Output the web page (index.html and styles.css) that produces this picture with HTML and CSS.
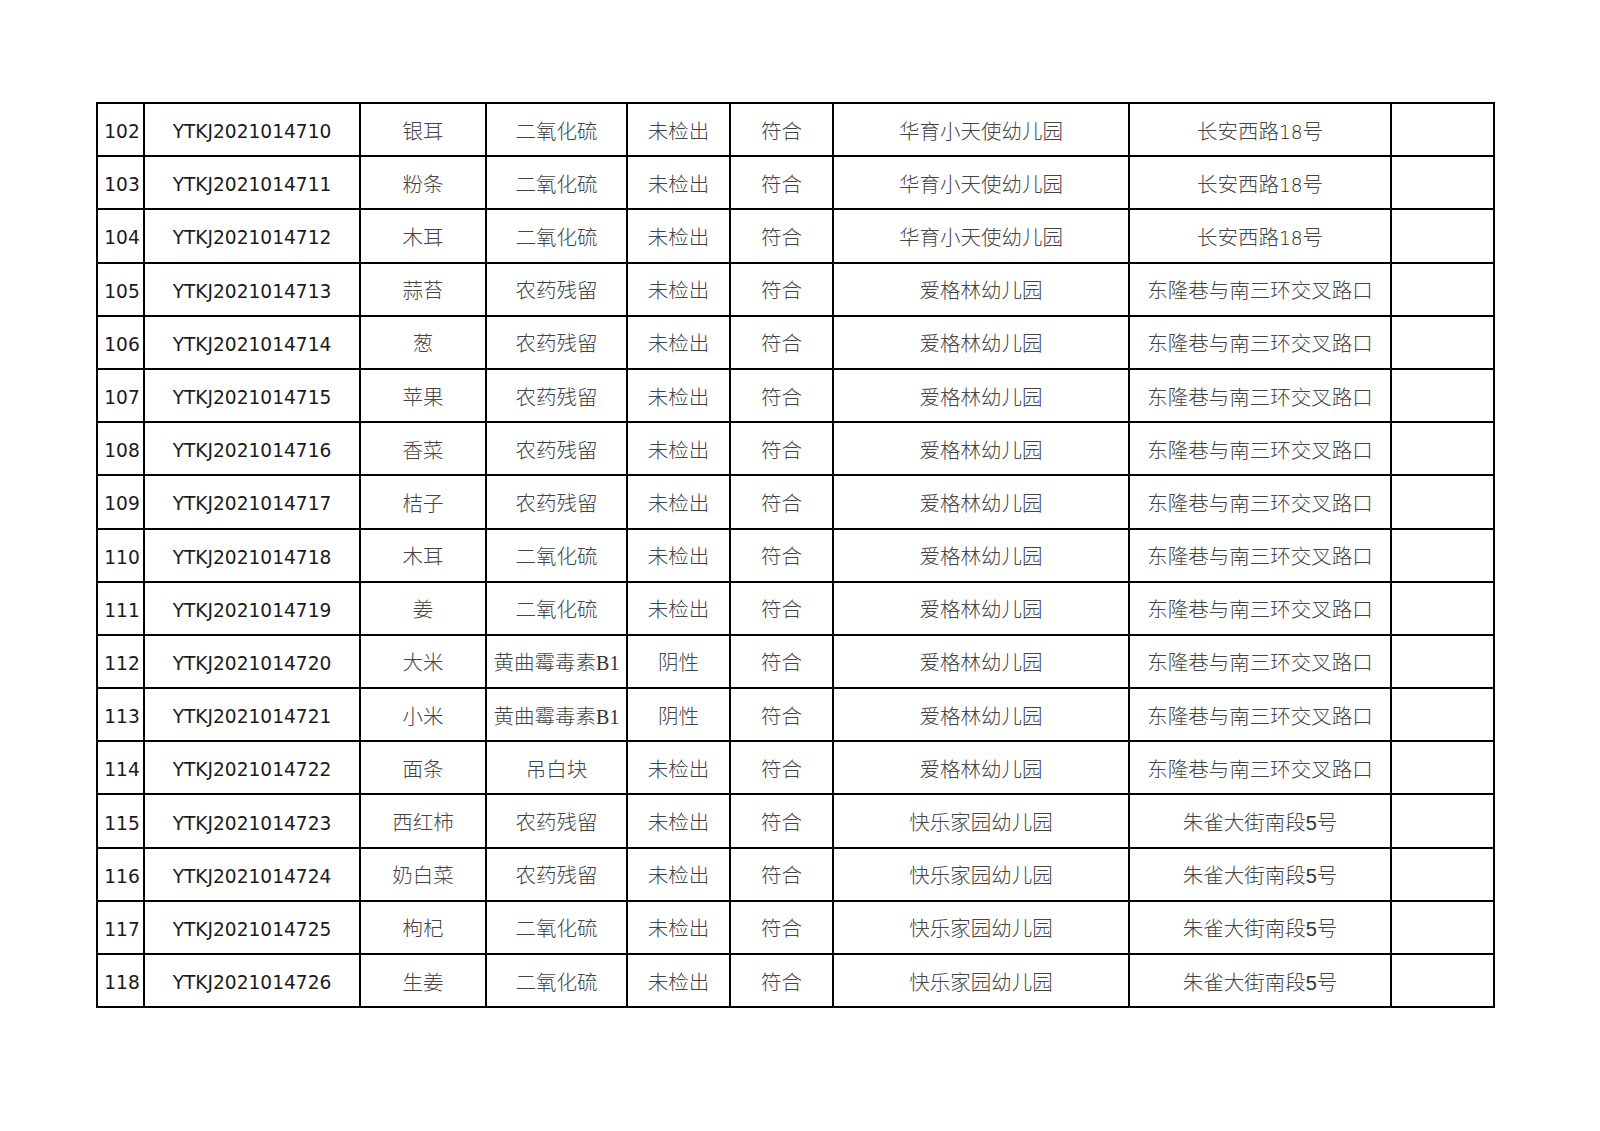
FILE: index.html
```html
<!DOCTYPE html>
<html lang="zh">
<head>
<meta charset="utf-8">
<link rel="stylesheet" href="styles.css">
</head>
<body>
<div class="page">
<table class="sheet">
<colgroup>
<col class="c1"><col class="c2"><col class="c3"><col class="c4"><col class="c5"><col class="c6"><col class="c7"><col class="c8"><col class="c9">
</colgroup>
<tbody>
<tr><td class="lat">102</td><td class="lat">YTKJ2021014710</td><td class="zh">银耳</td><td class="zh">二氧化硫</td><td class="zh">未检出</td><td class="zh">符合</td><td class="zh">华育小天使幼儿园</td><td class="zh">长安西路<span class="lat">18</span>号</td><td></td></tr>
<tr><td class="lat">103</td><td class="lat">YTKJ2021014711</td><td class="zh">粉条</td><td class="zh">二氧化硫</td><td class="zh">未检出</td><td class="zh">符合</td><td class="zh">华育小天使幼儿园</td><td class="zh">长安西路<span class="lat">18</span>号</td><td></td></tr>
<tr><td class="lat">104</td><td class="lat">YTKJ2021014712</td><td class="zh">木耳</td><td class="zh">二氧化硫</td><td class="zh">未检出</td><td class="zh">符合</td><td class="zh">华育小天使幼儿园</td><td class="zh">长安西路<span class="lat">18</span>号</td><td></td></tr>
<tr><td class="lat">105</td><td class="lat">YTKJ2021014713</td><td class="zh">蒜苔</td><td class="zh">农药残留</td><td class="zh">未检出</td><td class="zh">符合</td><td class="zh">爱格林幼儿园</td><td class="zh">东隆巷与南三环交叉路口</td><td></td></tr>
<tr><td class="lat">106</td><td class="lat">YTKJ2021014714</td><td class="zh">葱</td><td class="zh">农药残留</td><td class="zh">未检出</td><td class="zh">符合</td><td class="zh">爱格林幼儿园</td><td class="zh">东隆巷与南三环交叉路口</td><td></td></tr>
<tr><td class="lat">107</td><td class="lat">YTKJ2021014715</td><td class="zh">苹果</td><td class="zh">农药残留</td><td class="zh">未检出</td><td class="zh">符合</td><td class="zh">爱格林幼儿园</td><td class="zh">东隆巷与南三环交叉路口</td><td></td></tr>
<tr><td class="lat">108</td><td class="lat">YTKJ2021014716</td><td class="zh">香菜</td><td class="zh">农药残留</td><td class="zh">未检出</td><td class="zh">符合</td><td class="zh">爱格林幼儿园</td><td class="zh">东隆巷与南三环交叉路口</td><td></td></tr>
<tr><td class="lat">109</td><td class="lat">YTKJ2021014717</td><td class="zh">桔子</td><td class="zh">农药残留</td><td class="zh">未检出</td><td class="zh">符合</td><td class="zh">爱格林幼儿园</td><td class="zh">东隆巷与南三环交叉路口</td><td></td></tr>
<tr><td class="lat">110</td><td class="lat">YTKJ2021014718</td><td class="zh">木耳</td><td class="zh">二氧化硫</td><td class="zh">未检出</td><td class="zh">符合</td><td class="zh">爱格林幼儿园</td><td class="zh">东隆巷与南三环交叉路口</td><td></td></tr>
<tr><td class="lat">111</td><td class="lat">YTKJ2021014719</td><td class="zh">姜</td><td class="zh">二氧化硫</td><td class="zh">未检出</td><td class="zh">符合</td><td class="zh">爱格林幼儿园</td><td class="zh">东隆巷与南三环交叉路口</td><td></td></tr>
<tr><td class="lat">112</td><td class="lat">YTKJ2021014720</td><td class="zh">大米</td><td class="zh">黄曲霉毒素<span class="ser">B1</span></td><td class="zh">阴性</td><td class="zh">符合</td><td class="zh">爱格林幼儿园</td><td class="zh">东隆巷与南三环交叉路口</td><td></td></tr>
<tr><td class="lat">113</td><td class="lat">YTKJ2021014721</td><td class="zh">小米</td><td class="zh">黄曲霉毒素<span class="ser">B1</span></td><td class="zh">阴性</td><td class="zh">符合</td><td class="zh">爱格林幼儿园</td><td class="zh">东隆巷与南三环交叉路口</td><td></td></tr>
<tr><td class="lat">114</td><td class="lat">YTKJ2021014722</td><td class="zh">面条</td><td class="zh">吊白块</td><td class="zh">未检出</td><td class="zh">符合</td><td class="zh">爱格林幼儿园</td><td class="zh">东隆巷与南三环交叉路口</td><td></td></tr>
<tr><td class="lat">115</td><td class="lat">YTKJ2021014723</td><td class="zh">西红柿</td><td class="zh">农药残留</td><td class="zh">未检出</td><td class="zh">符合</td><td class="zh">快乐家园幼儿园</td><td class="zh">朱雀大街南段<span class="num">5</span>号</td><td></td></tr>
<tr><td class="lat">116</td><td class="lat">YTKJ2021014724</td><td class="zh">奶白菜</td><td class="zh">农药残留</td><td class="zh">未检出</td><td class="zh">符合</td><td class="zh">快乐家园幼儿园</td><td class="zh">朱雀大街南段<span class="num">5</span>号</td><td></td></tr>
<tr><td class="lat">117</td><td class="lat">YTKJ2021014725</td><td class="zh">枸杞</td><td class="zh">二氧化硫</td><td class="zh">未检出</td><td class="zh">符合</td><td class="zh">快乐家园幼儿园</td><td class="zh">朱雀大街南段<span class="num">5</span>号</td><td></td></tr>
<tr><td class="lat">118</td><td class="lat">YTKJ2021014726</td><td class="zh">生姜</td><td class="zh">二氧化硫</td><td class="zh">未检出</td><td class="zh">符合</td><td class="zh">快乐家园幼儿园</td><td class="zh">朱雀大街南段<span class="num">5</span>号</td><td></td></tr>
</tbody>
</table>
</div>
</body>
</html>
```
FILE: styles.css
```css
html, body {
  margin: 0;
  padding: 0;
  background: #fff;
}
.page {
  padding: 102px 0 0 96px;
}
.sheet {
  border-collapse: collapse;
  table-layout: fixed;
  width: 1399px;
}
.sheet td {
  border: 2px solid #000;
  height: 51.2px;
  padding: 0;
  text-align: center;
  vertical-align: middle;
  white-space: nowrap;
  overflow: hidden;
}
.c1 { width: 47px; }
.c2 { width: 216px; }
.c3 { width: 126px; }
.c4 { width: 141px; }
.c5 { width: 103px; }
.c6 { width: 103px; }
.c7 { width: 296px; }
.c8 { width: 262px; }
.c9 { width: 103px; }
.lat {
  font-family: "DejaVu Sans", Verdana, sans-serif;
  font-size: 18.6px;
  color: #1a1a1a;
}
.sheet td.lat {
  height: 47.2px;
  padding-top: 4px;
}
.sheet td.lat:first-child {
  padding-left: 3px;
}
.zh {
  font-family: "Noto Sans CJK SC", sans-serif;
  font-size: 20.5px;
  font-weight: 300;
  color: #444;
}
.zh .lat {
  font-size: 18.6px;
}
.num {
  font-family: "Liberation Sans", sans-serif;
  font-size: 20px;
  color: #333;
}
.ser {
  font-family: "Liberation Serif", serif;
  font-size: 20px;
  color: #333;
}
```
